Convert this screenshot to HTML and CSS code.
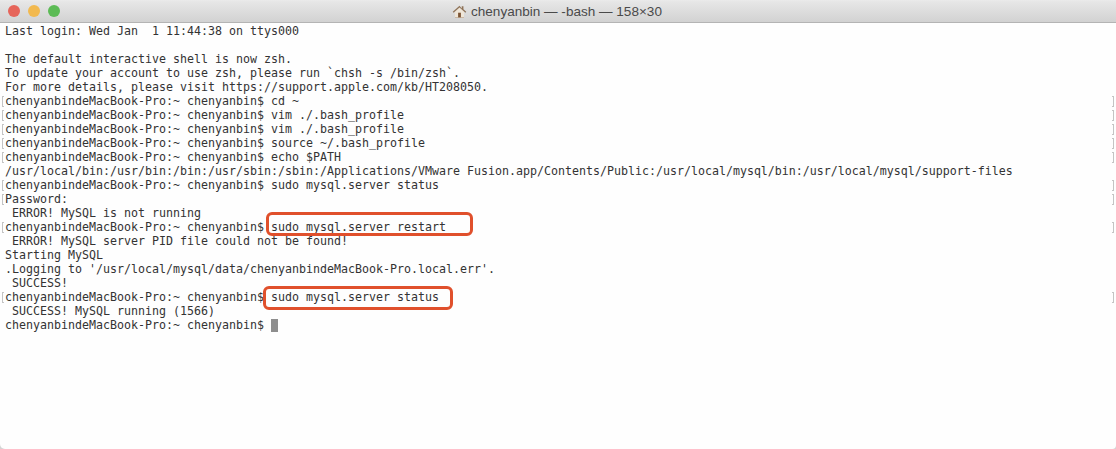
FILE: index.html
```html
<!DOCTYPE html>
<html lang="en">
<head>
<meta charset="utf-8">
<title>chenyanbin — -bash — 158×30</title>
<link rel="stylesheet" href="styles.css">
</head>
<body>
<div class="window">
  <header class="titlebar">
    <div class="lights">
      <span class="light red"></span>
      <span class="light yellow"></span>
      <span class="light green"></span>
    </div>
    <div class="title">
      <svg class="home" viewBox="0 0 16 16" width="15" height="15" aria-hidden="true">
        <path d="M3.200 8 8 3.800 12.800 8v6.500H3.200z" fill="#efe6d8"/>
        <path d="M8 1.800 .8 8.200l.9 1L8 3.700l6.300 5.500.9-1-3-2.700V2.500h-1.800v2.400z" fill="#8f7358"/>
        <path d="M6.500 9.300h3v5.200h-3z" fill="#7d5535"/>
        <path d="M3.200 14.200h9.600v.6H3.200z" fill="#b49a7e"/>
      </svg>
      <span>chenyanbin — -bash — 158×30</span>
    </div>
  </header>
  <main class="term">
<div class="line">Last login: Wed Jan  1 11:44:38 on ttys000</div>
<div class="line"> </div>
<div class="line">The default interactive shell is now zsh.</div>
<div class="line">To update your account to use zsh, please run `chsh -s /bin/zsh`.</div>
<div class="line">For more details, please visit https://support.apple.com/kb/HT208050.</div>
<div class="line mark">chenyanbindeMacBook-Pro:~ chenyanbin$ cd ~</div>
<div class="line mark">chenyanbindeMacBook-Pro:~ chenyanbin$ vim ./.bash_profile</div>
<div class="line mark">chenyanbindeMacBook-Pro:~ chenyanbin$ vim ./.bash_profile</div>
<div class="line mark">chenyanbindeMacBook-Pro:~ chenyanbin$ source ~/.bash_profile</div>
<div class="line mark">chenyanbindeMacBook-Pro:~ chenyanbin$ echo $PATH</div>
<div class="line">/usr/local/bin:/usr/bin:/bin:/usr/sbin:/sbin:/Applications/VMware Fusion.app/Contents/Public:/usr/local/mysql/bin:/usr/local/mysql/support-files</div>
<div class="line mark">chenyanbindeMacBook-Pro:~ chenyanbin$ sudo mysql.server status</div>
<div class="line mark">Password:</div>
<div class="line"> ERROR! MySQL is not running</div>
<div class="line mark">chenyanbindeMacBook-Pro:~ chenyanbin$ <span class="callout restart">sudo mysql.server restart</span></div>
<div class="line"> ERROR! MySQL server PID file could not be found!</div>
<div class="line">Starting MySQL</div>
<div class="line">.Logging to '/usr/local/mysql/data/chenyanbindeMacBook-Pro.local.err'.</div>
<div class="line"> SUCCESS!</div>
<div class="line mark">chenyanbindeMacBook-Pro:~ chenyanbin$ <span class="callout status">sudo mysql.server status</span></div>
<div class="line"> SUCCESS! MySQL running (1566)</div>
<div class="line">chenyanbindeMacBook-Pro:~ chenyanbin$ <span class="cursor"></span></div>
  </main>
</div>
</body>
</html>
```

FILE: styles.css
```css
*, *::before, *::after { box-sizing: border-box; }
html, body { margin: 0; height: 100%; background: #d4d4d4; }
body { overflow: hidden; }
.window {
  width: 1116px;
  height: 449px;
  display: flex;
  flex-direction: column;
  background: #fefefe;
  border-radius: 0 0 4px 5px;
  overflow: hidden;
}
.titlebar {
  height: 23px;
  flex: none;
  display: flex;
  align-items: center;
  position: relative;
  background: linear-gradient(#ebebeb 0, #e6e6e6 2px, #d2d2d2 100%);
  border-bottom: 1px solid #b4b4b4;
}
.lights { display: flex; gap: 8px; padding-left: 8px; }
.light { width: 12px; height: 12px; border-radius: 50%; }
.red { background: #e6655a; }
.yellow { background: #f2b94f; }
.green { background: #5cbb55; }
.title {
  position: absolute;
  left: 452px;
  top: 3px;
  display: flex;
  align-items: center;
  gap: 4px;
  font: 13.55px/17px "Liberation Sans", Arial, sans-serif;
  color: #4a4a4a;
}
.home { flex: none; }
.term {
  padding: 1px 0 0 5px;
  font: 11.63px/14px "DejaVu Sans Mono", monospace;
  color: #333;
}
.line { height: 14px; white-space: pre; position: relative; }
.mark::before {
  content: "";
  position: absolute;
  left: -3px;
  top: 2px;
  width: 2px;
  height: 11px;
  border: 1px solid #c4c4c4;
  border-right: 0;
}
.mark::after {
  content: "";
  position: absolute;
  left: 1107px;
  top: 2px;
  width: 2px;
  height: 11px;
  border: 1px solid #c4c4c4;
  border-left: 0;
}
.callout { position: relative; }
.callout::after {
  content: "";
  position: absolute;
  height: 24px;
  border: 3px solid #e0502c;
  border-radius: 6px;
}
.restart::after { left: -5px; top: -8px; width: 207px; }
.status::after { left: -8px; top: -4px; width: 190px; }
.cursor { display: inline-block; width: 7px; height: 13px; background: #8e8e8e; vertical-align: -3px; }
```
